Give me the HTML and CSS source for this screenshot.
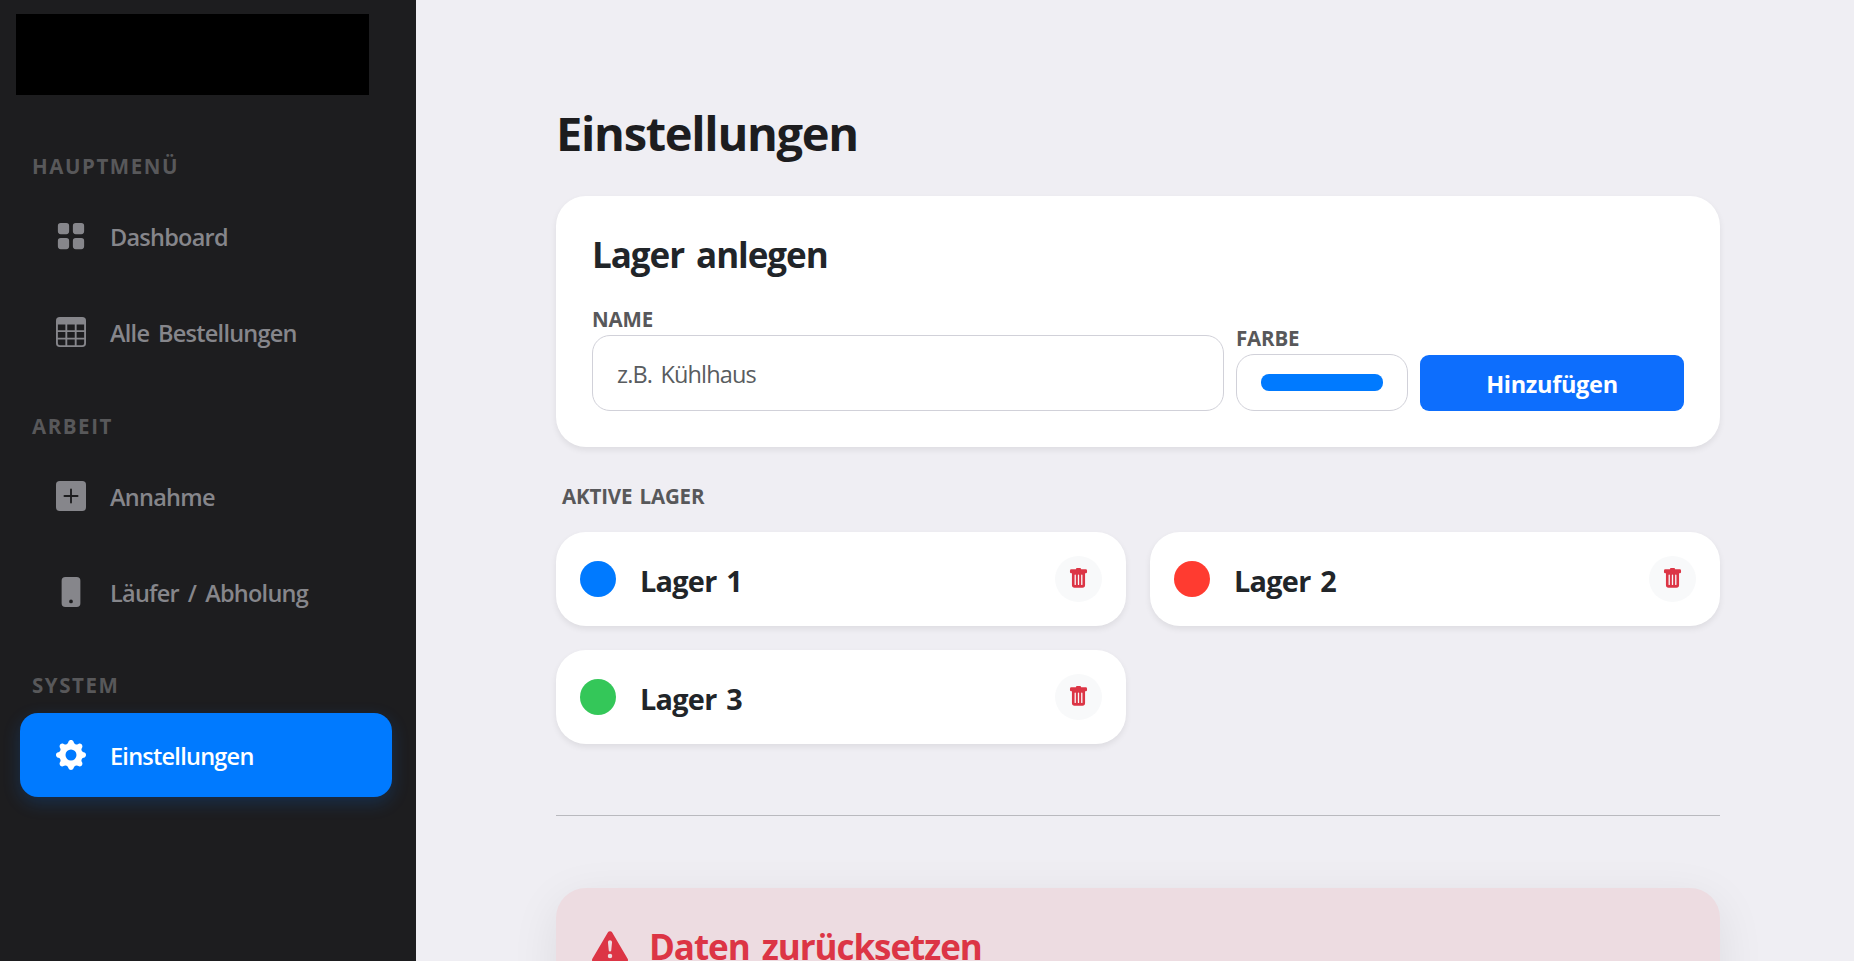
FILE: index.html
```html
<!DOCTYPE html>
<html lang="de" dir="ltr">
  <head>
    <meta charset="utf-8" />
    <meta name="viewport" content="width=device-width, initial-scale=1.0" />
    <title>Einstellungen</title>
    <link rel="stylesheet" href="styles.css">
  </head>
  <body>
    <!-- Icon definitions -->
    <svg class="icon-defs">
      <symbol id="icon-trash" viewBox="0 0 16 16">
        <path d="M2.5 1a1 1 0 0 0-1 1v1a1 1 0 0 0 1 1H3v9a2 2 0 0 0 2 2h6a2 2 0 0 0 2-2V4h.5a1 1 0 0 0 1-1V2a1 1 0 0 0-1-1H10a1 1 0 0 0-1-1H7a1 1 0 0 0-1 1zm3 4a.5.5 0 0 1 .5.5v7a.5.5 0 0 1-1 0v-7a.5.5 0 0 1 .5-.5M8 5a.5.5 0 0 1 .5.5v7a.5.5 0 0 1-1 0v-7A.5.5 0 0 1 8 5m3 .5v7a.5.5 0 0 1-1 0v-7a.5.5 0 0 1 1 0" />
      </symbol>
    </svg>

    <aside class="sidebar">
      <div class="logo"></div>

      <nav class="menu">
        <div class="menu-section">
          <div class="menu-label">Hauptmenü</div>
          <a class="menu-item" href="#">
            <svg class="icon" viewBox="0 0 16 16"><path d="M1 2.5A1.5 1.5 0 0 1 2.5 1h3A1.5 1.5 0 0 1 7 2.5v3A1.5 1.5 0 0 1 5.5 7h-3A1.5 1.5 0 0 1 1 5.5zm8 0A1.5 1.5 0 0 1 10.5 1h3A1.5 1.5 0 0 1 15 2.5v3A1.5 1.5 0 0 1 13.5 7h-3A1.5 1.5 0 0 1 9 5.5zm-8 8A1.5 1.5 0 0 1 2.5 9h3A1.5 1.5 0 0 1 7 10.5v3A1.5 1.5 0 0 1 5.5 15h-3A1.5 1.5 0 0 1 1 13.5zm8 0A1.5 1.5 0 0 1 10.5 9h3a1.5 1.5 0 0 1 1.5 1.5v3a1.5 1.5 0 0 1-1.5 1.5h-3A1.5 1.5 0 0 1 9 13.5z" /></svg>
            <span>Dashboard</span>
          </a>
          <a class="menu-item" href="#">
            <svg class="icon" viewBox="0 0 16 16"><path d="M0 2a2 2 0 0 1 2-2h12a2 2 0 0 1 2 2v12a2 2 0 0 1-2 2H2a2 2 0 0 1-2-2zm15 2h-4v3h4zm0 4h-4v3h4zm0 4h-4v3h3a1 1 0 0 0 1-1zm-5 3v-3H6v3zm-5 0v-3H1v2a1 1 0 0 0 1 1zm-4-4h4V8H1zm0-4h4V4H1zm5-3v3h4V4zm4 4H6v3h4z" /></svg>
            <span>Alle Bestellungen</span>
          </a>
        </div>

        <div class="menu-section">
          <div class="menu-label">Arbeit</div>
          <a class="menu-item" href="#">
            <svg class="icon" viewBox="0 0 16 16"><path d="M2 0a2 2 0 0 0-2 2v12a2 2 0 0 0 2 2h12a2 2 0 0 0 2-2V2a2 2 0 0 0-2-2zm6.5 4.5v3h3a.5.5 0 0 1 0 1h-3v3a.5.5 0 0 1-1 0v-3h-3a.5.5 0 0 1 0-1h3v-3a.5.5 0 0 1 1 0" /></svg>
            <span>Annahme</span>
          </a>
          <a class="menu-item" href="#">
            <svg class="icon" viewBox="0 0 16 16"><path d="M3 2a2 2 0 0 1 2-2h6a2 2 0 0 1 2 2v12a2 2 0 0 1-2 2H5a2 2 0 0 1-2-2zm6 11a1 1 0 1 0-2 0 1 1 0 0 0 2 0" /></svg>
            <span>Läufer / Abholung</span>
          </a>
        </div>

        <div class="menu-section">
          <div class="menu-label">System</div>
          <a class="menu-item active" href="#">
            <svg class="icon" viewBox="0 0 16 16"><path d="M9.405 1.05c-.413-1.4-2.397-1.4-2.81 0l-.1.34a1.464 1.464 0 0 1-2.105.872l-.31-.17c-1.283-.698-2.686.705-1.987 1.987l.169.311c.446.82.023 1.841-.872 2.105l-.34.1c-1.4.413-1.4 2.397 0 2.81l.34.1a1.464 1.464 0 0 1 .872 2.105l-.17.31c-.698 1.283.705 2.686 1.987 1.987l.311-.169a1.464 1.464 0 0 1 2.105.872l.1.34c.413 1.4 2.397 1.4 2.81 0l.1-.34a1.464 1.464 0 0 1 2.105-.872l.31.17c1.283.698 2.686-.705 1.987-1.987l-.169-.311a1.464 1.464 0 0 1 .872-2.105l.34-.1c1.4-.413 1.4-2.397 0-2.81l-.34-.1a1.464 1.464 0 0 1-.872-2.105l.17-.31c.698-1.283-.705-2.686-1.987-1.987l-.311.169a1.464 1.464 0 0 1-2.105-.872zM8 10.93a2.929 2.929 0 1 1 0-5.86 2.929 2.929 0 0 1 0 5.858z" /></svg>
            <span>Einstellungen</span>
          </a>
        </div>
      </nav>
    </aside>

    <main class="content">
      <h1>Einstellungen</h1>

      <section class="card">
        <h2>Lager anlegen</h2>
        <form class="lager-form">
          <div class="field field-name">
            <label for="name">Name</label>
            <input type="text" id="name" placeholder="z.B. Kühlhaus" />
          </div>
          <div class="field field-color">
            <label for="color">Farbe</label>
            <button type="button" id="color" class="color-picker"><span class="color-value"></span></button>
          </div>
          <button type="button" class="btn-add">Hinzufügen</button>
        </form>
      </section>

      <h3>Aktive Lager</h3>
      <div class="lager-grid">
        <div class="lager">
          <span class="dot blue"></span>
          <span class="lager-name">Lager 1</span>
          <button class="btn-delete" aria-label="Löschen"><svg class="icon-trash"><use href="#icon-trash" /></svg></button>
        </div>
        <div class="lager">
          <span class="dot red"></span>
          <span class="lager-name">Lager 2</span>
          <button class="btn-delete" aria-label="Löschen"><svg class="icon-trash"><use href="#icon-trash" /></svg></button>
        </div>
        <div class="lager">
          <span class="dot green"></span>
          <span class="lager-name">Lager 3</span>
          <button class="btn-delete" aria-label="Löschen"><svg class="icon-trash"><use href="#icon-trash" /></svg></button>
        </div>
      </div>

      <hr />

      <section class="card danger">
        <svg class="icon-warning" viewBox="0 0 16 16"><path d="M8.982 1.566a1.13 1.13 0 0 0-1.96 0L.165 13.233c-.457.778.091 1.767.98 1.767h13.713c.889 0 1.438-.99.98-1.767zM8 5c.535 0 .954.462.9.995l-.35 3.507a.552.552 0 0 1-1.1 0L7.1 5.995A.905.905 0 0 1 8 5m.002 6a1 1 0 1 1 0 2 1 1 0 0 1 0-2" /></svg>
        <h2>Daten zurücksetzen</h2>
      </section>
    </main>
  </body>
</html>
```

FILE: styles.css
```css
* {
  box-sizing: border-box;
}

body {
  margin: 0;
  height: 100vh;
  display: flex;
  overflow: hidden;
  font-family: "Segoe UI", "Open Sans", "Noto Sans", sans-serif;
  background-color: #efeef3;
  color: #212529;
}

h1,
h2,
h3 {
  margin: 0;
}

svg {
  fill: currentColor;
  flex-shrink: 0;
}

.icon-defs {
  display: none;
}

/* Sidebar */
.sidebar {
  width: 416px;
  flex-shrink: 0;
  padding: 14px 24px 0 20px;
  background-color: #1d1d1f;
}

.logo {
  width: 353px;
  height: 81px;
  margin: 0 0 55px -4px;
  background-color: #000;
}

.menu {
  display: flex;
  flex-direction: column;
  gap: 35.5px;
}

.menu-section {
  display: flex;
  flex-direction: column;
  gap: 12px;
}

.menu-label {
  padding-left: 12px;
  font-size: 20.5px;
  font-weight: 700;
  line-height: 32px;
  letter-spacing: 1.55px;
  text-transform: uppercase;
  color: #58585a;
}

.menu-item {
  display: flex;
  align-items: center;
  gap: 24px;
  height: 84px;
  padding-left: 36px;
  border-radius: 18px;
  font-size: 23.5px;
  font-weight: 600;
  letter-spacing: -0.75px;
  word-spacing: 3.5px;
  color: #86868b;
  text-decoration: none;
}

.menu-item span {
  padding-top: 2px;
}

.menu-item.active {
  background-color: #007aff;
  color: #fff;
  box-shadow: 0 6px 18px rgba(0, 122, 255, 0.2);
}

.icon {
  width: 30px;
  height: 30px;
}

/* Content */
.content {
  flex: 1;
  padding: 104px 134px 0 140px;
}

h1 {
  margin-bottom: 34px;
  font-size: 47px;
  line-height: 58px;
  letter-spacing: -1.3px;
  color: #1d1d1f;
}

.card {
  padding: 36px;
  border-radius: 30px;
  background-color: #fff;
  box-shadow: 0 3px 6px rgba(0, 0, 0, 0.075);
}

h2 {
  font-size: 35px;
  line-height: 46px;
  letter-spacing: -1.05px;
  word-spacing: 4px;
}

.lager-form {
  display: flex;
  align-items: flex-end;
  gap: 12px;
  margin-top: 25px;
}

.field {
  display: flex;
  flex-direction: column;
}

.field-name {
  flex: 1;
}

.field-color {
  width: 172px;
}

label,
h3 {
  font-size: 20.5px;
  font-weight: 700;
  line-height: 32px;
  letter-spacing: -0.15px;
  word-spacing: 2px;
  text-transform: uppercase;
  color: #58585a;
}

input {
  height: 76px;
  padding: 2px 24px 0;
  border: 1px solid #d1d1d9;
  border-radius: 18px;
  font-family: inherit;
  font-size: 23.5px;
  letter-spacing: -0.85px;
  word-spacing: 3px;
}

input::placeholder {
  color: #595c5f;
}

.color-picker {
  display: flex;
  height: 57px;
  padding: 19px 24px;
  border: 1px solid #d1d1d9;
  border-radius: 18px;
  background-color: #fff;
}

.color-value {
  flex: 1;
  height: 17px;
  border-radius: 8px;
  background-color: #007aff;
}

.btn-add {
  width: 264px;
  height: 56px;
  padding: 2px 0 0;
  border: none;
  border-radius: 9px;
  background-color: #0d6efd;
  color: #fff;
  font-family: inherit;
  font-size: 23.5px;
  font-weight: 700;
  letter-spacing: -0.3px;
}

h3 {
  margin: 33px 0 20px;
  padding-left: 6px;
}

.lager-grid {
  display: grid;
  grid-template-columns: 1fr 1fr;
  gap: 24px;
}

.lager {
  display: flex;
  align-items: center;
  height: 93.75px;
  padding: 0 24px;
  border-radius: 30px;
  background-color: #fff;
  box-shadow: 0 3px 6px rgba(0, 0, 0, 0.075);
}

.dot {
  width: 36px;
  height: 36px;
  margin-right: 24px;
  border-radius: 50%;
}

.blue {
  background-color: #007aff;
}

.red {
  background-color: #ff3b30;
}

.green {
  background-color: #34c759;
}

.lager-name {
  flex: 1;
  padding-top: 3px;
  font-size: 28.8px;
  font-weight: 700;
  letter-spacing: -0.7px;
  word-spacing: 3px;
}

.btn-delete {
  display: flex;
  align-items: center;
  justify-content: center;
  width: 47px;
  height: 46px;
  padding: 0;
  border: none;
  border-radius: 50%;
  background-color: #f8f9fa;
  color: #dc3545;
}

.icon-trash {
  width: 21px;
  height: 21px;
}

hr {
  margin: 71px 0 72px;
  border: none;
  border-top: 1px solid #b9b9be;
}

.danger {
  display: flex;
  gap: 21px;
  height: 260px;
  background-color: #eddce1;
  color: #dc3545;
  box-shadow: 0 12px 48px rgba(0, 0, 0, 0.08);
}

.icon-warning {
  width: 36px;
  height: 36px;
  margin-top: 5px;
}
```
